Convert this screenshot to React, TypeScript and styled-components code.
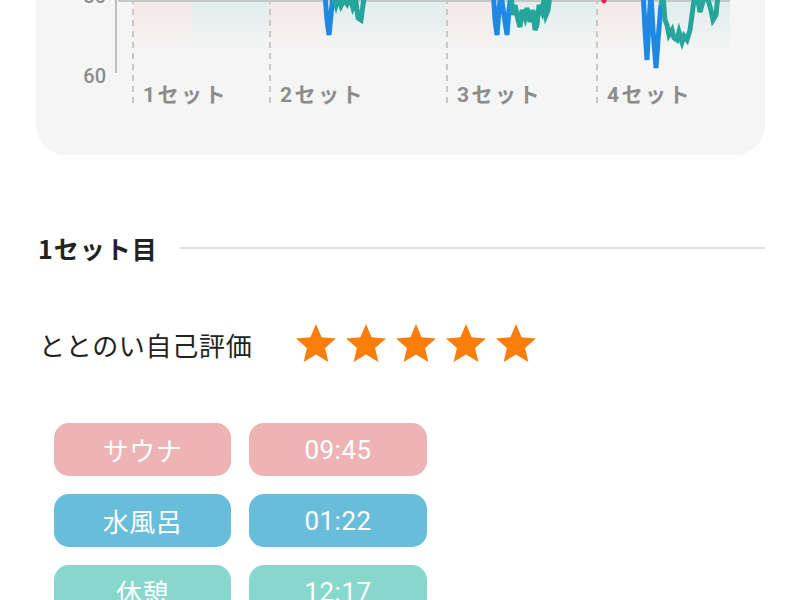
import React from "react";
import styled, { createGlobalStyle } from "styled-components";

const GlobalStyle = createGlobalStyle`
  html, body {
    margin: 0;
    padding: 0;
    background: #ffffff;
    overflow: hidden;
  }
  body {
    font-family: "Noto Sans CJK JP", "Noto Sans", sans-serif;
  }
`;

const Page = styled.main`
  display: flex;
  flex-direction: column;
  width: 800px;
  box-sizing: border-box;
  padding: 0 35px 0 36px;
  margin-top: -200px;
`;

const ChartCard = styled.section`
  background: #f5f5f5;
  border-radius: 30px;
  height: 355px;
  overflow: hidden;
`;

const ChartSvg = styled.svg`
  display: block;
  width: 729px;
  height: 355px;
`;

const SectionHeader = styled.div`
  margin-top: 75px;
  display: flex;
  align-items: center;
  gap: 22px;
  height: 36px;
  padding-left: 2px;
`;

const SectionTitle = styled.h2`
  margin: 0;
  font-size: 25px;
  font-weight: 700;
  letter-spacing: 1px;
  line-height: 36px;
  color: #222222;
  white-space: nowrap;
`;

const Rule = styled.div`
  flex: 1;
  height: 2px;
  background: #dedede;
`;

const RatingRow = styled.div`
  margin-top: 54px;
  display: flex;
  align-items: center;
  height: 48px;
  padding-left: 3px;
`;

const RatingLabel = styled.span`
  font-size: 26px;
  letter-spacing: 0.7px;
  color: #222222;
  white-space: nowrap;
`;

const Stars = styled.div`
  display: flex;
  gap: 2px;
  margin-left: 40px;
`;

const StarIcon = styled.svg`
  width: 48px;
  height: 48px;
  fill: #fb7d0a;
  display: block;
`;

const PillGrid = styled.div`
  margin-top: 55px;
  display: grid;
  grid-template-columns: 177px 178px;
  column-gap: 18px;
  row-gap: 18px;
  padding-left: 18px;
`;

const Pill = styled.div<{ $bg: string }>`
  height: 53px;
  border-radius: 15px;
  background: ${(p) => p.$bg};
  color: #ffffff;
  display: flex;
  align-items: center;
  justify-content: center;
  font-family: Roboto, "Noto Sans CJK JP", sans-serif;
  font-size: 26px;
  letter-spacing: 0.5px;
`;

const setLabels = [
  { x: 133, label: "1セット" },
  { x: 270, label: "2セット" },
  { x: 447, label: "3セット" },
  { x: 597, label: "4セット" },
];

const bands: { x0: number; x1: number; kind: "hot" | "cool" }[] = [
  { x0: 133, x1: 192, kind: "hot" },
  { x0: 192, x1: 270, kind: "cool" },
  { x0: 270, x1: 326, kind: "hot" },
  { x0: 326, x1: 447, kind: "cool" },
  { x0: 447, x1: 494, kind: "hot" },
  { x0: 494, x1: 597, kind: "cool" },
  { x0: 597, x1: 644, kind: "hot" },
  { x0: 644, x1: 730, kind: "cool" },
];

const toPts = (pts: number[][]) => pts.map((p) => p.join(",")).join(" ");

const redLines = [
  [[133, -90], [150, -110], [170, -120], [192, -100], [200, -60]],
  [[270, -80], [290, -100], [310, -90], [322, -40]],
  [[447, -70], [465, -95], [480, -85], [492, -30]],
  [[597, -50], [601, -20], [604, 1], [607, -12], [615, -70], [630, -90], [642, -30]],
];

const blueLines = [
  [[322, -40], [325, -5], [327, 20], [329, 35], [331, 15], [333, -5]],
  [[492, -30], [495, 20], [497, 35], [499, 10], [501, -5], [504, 15], [507, 35], [509, 10], [511, -5]],
  [[642, -30], [645, 30], [647, 60], [649, 20], [651, -5], [653, 30], [656, 68], [658, 40], [661, 5]],
];

const tealLines = [
  [[333, -5], [336, 5], [338, -2], [341, 6], [344, 0], [347, 4], [350, -3], [353, 8], [356, 2], [358, 18], [361, 20], [363, 5], [366, -15], [372, -30]],
  [[511, -5], [513, 15], [515, 5], [518, 20], [520, 27], [522, 10], [525, 18], [527, 8], [530, 22], [533, 10], [535, 30], [537, 25], [539, 5], [542, 12], [544, 0], [546, 15], [548, 10], [550, -5], [556, -25]],
  [[661, 5], [663, -5], [665, 20], [667, 25], [669, 35], [672, 30], [674, 38], [677, 40], [679, 32], [682, 42], [684, 36], [687, 40], [690, 30], [692, 15], [694, 0], [697, -5], [700, 12], [702, 5], [705, -5], [708, 0], [711, 10], [713, 20], [716, 15], [718, -5], [724, -20]],
];

const yLabels = [
  { v: "80", y: 3 },
  { v: "60", y: 83 },
];

function HeartChart() {
  return (
    <ChartSvg viewBox="36 -200 729 355" xmlns="http://www.w3.org/2000/svg">
      <defs>
        <linearGradient id="hotGrad" gradientUnits="userSpaceOnUse" x1="0" y1="-200" x2="0" y2="55">
          <stop offset="0" stopColor="#f08080" stopOpacity="0.3" />
          <stop offset="0.784" stopColor="#f08080" stopOpacity="0.12" />
          <stop offset="1" stopColor="#f08080" stopOpacity="0" />
        </linearGradient>
        <linearGradient id="coolGrad" gradientUnits="userSpaceOnUse" x1="0" y1="-200" x2="0" y2="55">
          <stop offset="0" stopColor="#26a69a" stopOpacity="0.25" />
          <stop offset="0.784" stopColor="#26a69a" stopOpacity="0.1" />
          <stop offset="1" stopColor="#26a69a" stopOpacity="0" />
        </linearGradient>
      </defs>

      {bands.map((b, i) => (
        <rect
          key={i}
          x={b.x0}
          y={-200}
          width={b.x1 - b.x0}
          height={255}
          fill={b.kind === "hot" ? "url(#hotGrad)" : "url(#coolGrad)"}
        />
      ))}

      {[-159, -79, 1].map((y) => (
        <line key={y} x1={118} x2={730} y1={y} y2={y} stroke="#c4c9c6" strokeWidth={2} />
      ))}

      <line x1={116} x2={116} y1={-200} y2={73} stroke="#bdbdbd" strokeWidth={2} />

      {yLabels.map((l) => (
        <text
          key={l.v}
          x={106}
          y={l.y}
          textAnchor="end"
          fontFamily="Roboto, sans-serif"
          fontWeight={500}
          fontSize={20}
          fill="#8c8c8c"
        >
          {l.v}
        </text>
      ))}

      {setLabels.map((s) => (
        <g key={s.label}>
          <line
            x1={s.x}
            x2={s.x}
            y1={-200}
            y2={103}
            stroke="#c8c8c8"
            strokeWidth={2}
            strokeDasharray="6 5"
          />
          <text
            x={s.x + 10}
            y={102}
            fontFamily="Roboto, 'Noto Sans CJK JP', sans-serif"
            fontWeight={700}
            fontSize={21}
            letterSpacing={2.5}
            fill="#8c8c8c"
          >
            {s.label}
          </text>
        </g>
      ))}

      {redLines.map((p, i) => (
        <polyline key={"r" + i} points={toPts(p)} fill="none" stroke="#e91e63" strokeWidth={5} strokeLinejoin="round" />
      ))}
      {blueLines.map((p, i) => (
        <polyline key={"b" + i} points={toPts(p)} fill="none" stroke="#1e88e5" strokeWidth={5} strokeLinejoin="miter" />
      ))}
      {tealLines.map((p, i) => (
        <polyline key={"t" + i} points={toPts(p)} fill="none" stroke="#26a69a" strokeWidth={5} strokeLinejoin="miter" />
      ))}
    </ChartSvg>
  );
}

function Star() {
  return (
    <StarIcon viewBox="0 0 24 24" aria-hidden="true">
      <path d="M12 17.27L18.18 21l-1.64-7.03L22 9.24l-7.19-.61L12 2 9.19 8.63 2 9.24l5.46 4.73L5.82 21z" />
    </StarIcon>
  );
}

const steps = [
  { name: "サウナ", time: "09:45", color: "#edb3b5" },
  { name: "水風呂", time: "01:22", color: "#68bddb" },
  { name: "休憩", time: "12:17", color: "#88d7cd" },
];

export default function App() {
  return (
    <>
      <GlobalStyle />
      <Page>
        <ChartCard>
          <HeartChart />
        </ChartCard>

        <SectionHeader>
          <SectionTitle>1セット目</SectionTitle>
          <Rule />
        </SectionHeader>

        <RatingRow>
          <RatingLabel>ととのい自己評価</RatingLabel>
          <Stars>
            {[0, 1, 2, 3, 4].map((i) => (
              <Star key={i} />
            ))}
          </Stars>
        </RatingRow>

        <PillGrid>
          {steps.map((s) => (
            <React.Fragment key={s.name}>
              <Pill $bg={s.color}>{s.name}</Pill>
              <Pill $bg={s.color}>{s.time}</Pill>
            </React.Fragment>
          ))}
        </PillGrid>
      </Page>
    </>
  );
}
